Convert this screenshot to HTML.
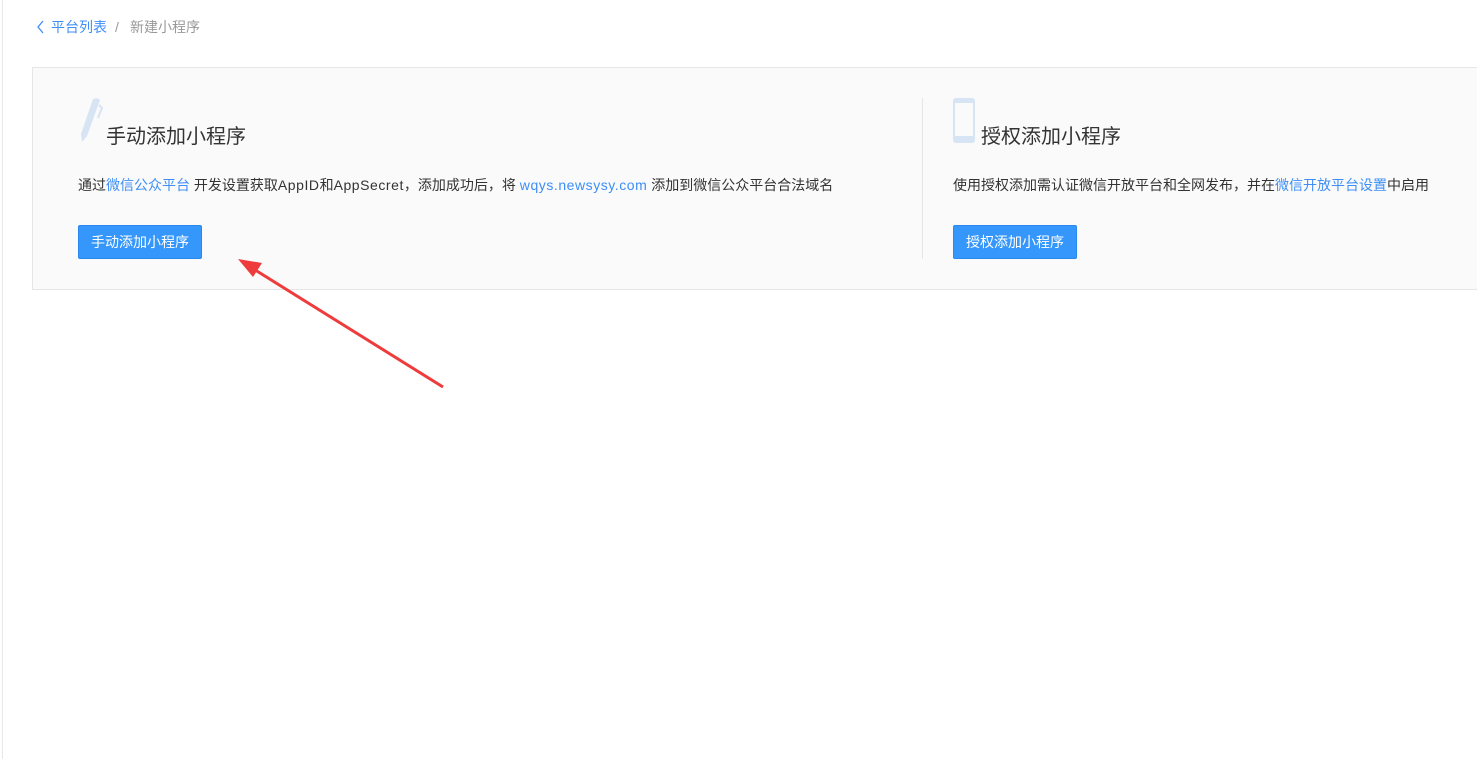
<!DOCTYPE html>
<html><head><meta charset="utf-8"><style>
body{margin:0;width:1477px;height:759px;background:#fff;font-family:"Liberation Sans","Noto Sans CJK SC",sans-serif;position:relative;overflow:hidden}
.lb{position:absolute;left:2px;top:0;width:1px;height:759px;background:#e8e8e8}
.bc{position:absolute;top:17px;font-size:14px;color:#999;line-height:20px;white-space:nowrap}
.bc a{color:#3e8ef7}
.card{position:absolute;left:32px;top:67px;width:1460px;height:221px;background:#fafafa;border:1px solid #e6e6e6}
.div{position:absolute;left:922px;top:98px;width:1px;height:161px;background:#e6e6e6}
.t{position:absolute;font-size:20px;color:#333;line-height:24px}
.d{position:absolute;font-size:14px;color:#333;line-height:20px;white-space:nowrap}
.d a{color:#3e8ef7}
.l{letter-spacing:0.55px}
.btn{position:absolute;top:225px;height:32px;border:1px solid #2b88ee;background:#3597fb;color:#fff;font-size:14px;line-height:32px;text-align:center;border-radius:2px}
</style></head><body>
<div class="lb"></div>
<svg style="position:absolute;left:36px;top:20px" width="10" height="14"><path d="M7 1 L2 7 L7 13" stroke="#3e8ef7" stroke-width="1.3" fill="none"/></svg>
<div class="bc" style="left:51px"><a>平台列表</a></div>
<div class="bc" style="left:115px">/</div>
<div class="bc" style="left:130px">新建小程序</div>
<div class="card"></div>
<div class="div"></div>
<svg style="position:absolute;left:76px;top:96px" width="28" height="50"><path d="M17 3 Q21 1 24 4 L11 40 L6 46 L5 38 Z" fill="#d6e4f3"/><path d="M23 9 L26 12 L22 22" stroke="#d6e4f3" stroke-width="2" fill="none"/></svg>
<div class="t" style="left:106px;top:125px">手动添加小程序</div>
<div class="d" style="left:78px;top:175px">通过<a>微信公众平台</a> 开发设置获取<span class="l">AppID</span>和<span class="l">AppSecret</span>，添加成功后，将 <a class="l">wqys.newsysy.com</a> 添加到微信公众平台合法域名</div>
<div class="btn" style="left:78px;width:122px">手动添加小程序</div>
<svg style="position:absolute;left:953px;top:98px" width="23" height="46"><rect x="0" y="0" width="22" height="45" rx="3" fill="#d6e4f3"/><rect x="2" y="5" width="18" height="33" fill="#fafafa"/></svg>
<div class="t" style="left:981px;top:125px">授权添加小程序</div>
<div class="d" style="left:953px;top:175px">使用授权添加需认证微信开放平台和全网发布，并在<a>微信开放平台设置</a>中启用</div>
<div class="btn" style="left:953px;width:122px">授权添加小程序</div>
<svg style="position:absolute;left:0;top:0" width="1477" height="759"><path d="M443 387 L252 268" stroke="#ee3b3b" stroke-width="3"/><polygon points="238,259 262,263 253,277" fill="#ee3b3b"/></svg>
</body></html>
